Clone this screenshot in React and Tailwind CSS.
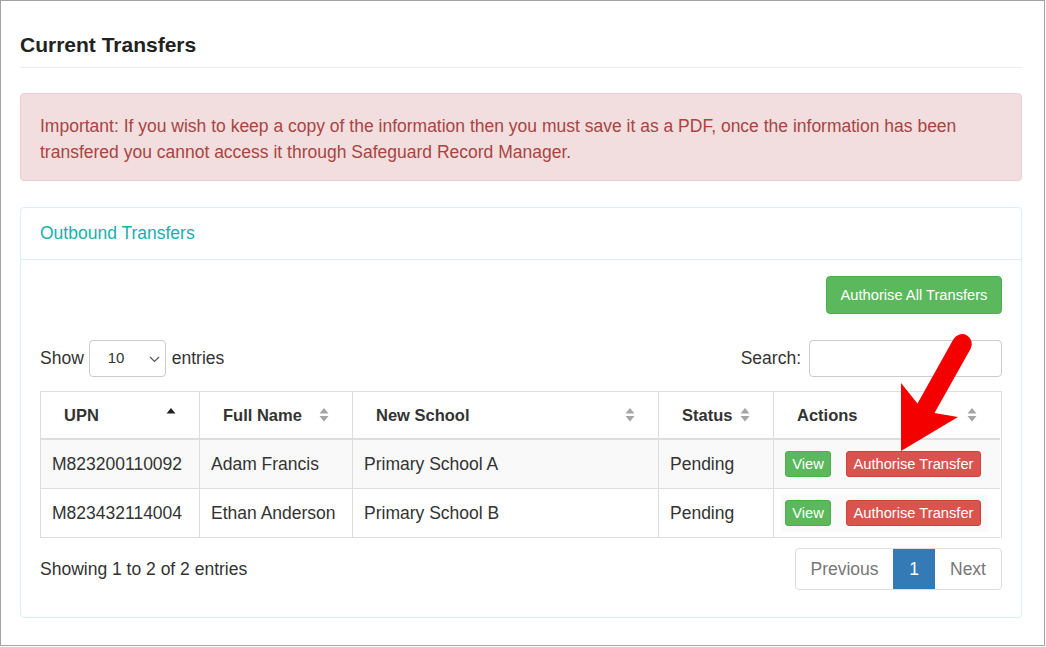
import React from "react";

const font = { fontFamily: '"Liberation Sans", Arial, sans-serif' };

function SortBoth() {
  return (
    <svg width="10" height="15" viewBox="0 0 10 15" className="absolute right-[23px] top-1/2 -translate-y-1/2">
      <path d="M5 0.5 L9.5 6 L0.5 6 Z" fill="#a5a5a5" />
      <path d="M0.5 8.5 L9.5 8.5 L5 14 Z" fill="#a5a5a5" />
    </svg>
  );
}

function SortUp() {
  return (
    <svg width="10" height="15" viewBox="0 0 10 15" className="absolute right-[23px] top-1/2 -translate-y-1/2">
      <path d="M5 0.5 L9.5 6 L0.5 6 Z" fill="#222" />
    </svg>
  );
}

function Th({ children, sort, last }) {
  return (
    <div className={`relative flex h-[48px] items-center border-b-2 border-[#ddd] ${last ? "" : "border-r"} pl-[23px] text-[16.5px] font-bold text-[#333]`}>
      {children}
      {sort === "up" ? <SortUp /> : <SortBoth />}
    </div>
  );
}

function Td({ children, last, bg }) {
  return (
    <div className={`flex h-[49px] items-center border-b border-[#ddd] ${last ? "" : "border-r"} ${bg} pl-[11px] text-[17.5px] text-[#333]`}>
      {children}
    </div>
  );
}

function Actions({ boxed }) {
  return (
    <div className={`flex items-center gap-[15px] ${boxed ? "bg-[#fafafa] -ml-[4px] px-[4px] py-[6px] pr-[7px]" : ""}`}>
      <button className="h-[26px] w-[46px] rounded-[3px] border border-[#4cae4c] bg-[#5cb85c] text-[14.7px] text-white">View</button>
      <button className="h-[26px] w-[135px] rounded-[3px] border border-[#d43f3a] bg-[#d9534f] text-[14.7px] text-white">Authorise Transfer</button>
    </div>
  );
}

const rows = [
  { upn: "M823200110092", name: "Adam Francis", school: "Primary School A", status: "Pending", bg: "bg-[#f9f9f9]" },
  { upn: "M823432114004", name: "Ethan Anderson", school: "Primary School B", status: "Pending", bg: "bg-white" },
];

export default function App() {
  return (
    <div style={font} className="relative h-[646px] w-[1045px] overflow-hidden border border-[#a3a3a3] bg-white pl-[19px] pr-[22px] text-[#333]">
      <h1 className="pt-[32px] text-[21px] font-bold leading-[24px] text-[#222]">Current Transfers</h1>
      <div className="mt-[10px] border-t border-[#eee]" />

      <div className="mt-[25px] rounded-[4px] border border-[#ebccd1] bg-[#f2dede] pb-[15px] pl-[19px] pr-[19px] pt-[19px] text-[17.5px] leading-[26px] text-[#a94442]">
        Important: If you wish to keep a copy of the information then you must save it as a PDF, once the information has been transfered you cannot access it through Safeguard Record Manager.
      </div>

      <div className="mt-[26px] rounded-[4px] border border-[#d8f2f2]">
        <div className="flex h-[52px] items-center border-b border-[#d8f2f2] pl-[19px] text-[17.5px] text-[#18b0ae]">
          Outbound Transfers
        </div>
        <div className="px-[19px] pb-[27px] pt-[16px]">
          <div className="flex justify-end">
            <button className="h-[38px] w-[176px] rounded-[4px] border border-[#4cae4c] bg-[#5cb85c] text-[14.7px] text-white">
              Authorise All Transfers
            </button>
          </div>

          <div className="mt-[26px] flex items-center justify-between">
            <div className="flex items-center text-[17.5px]">
              <span>Show</span>
              <div className="relative ml-[5px] mr-[6px] flex h-[37px] w-[77px] items-center rounded-[4px] border border-[#ccc] bg-white pl-[18px] text-[15px] text-[#333]">
                10
                <svg width="11" height="7" viewBox="0 0 11 7" className="absolute right-[5px] top-[15px]">
                  <path d="M1 1 L5.5 5.5 L10 1" fill="none" stroke="#555" strokeWidth="1.2" />
                </svg>
              </div>
              <span>entries</span>
            </div>
            <div className="flex items-center text-[17.5px]">
              <span className="mr-[8px]">Search:</span>
              <div className="h-[37px] w-[193px] rounded-[4px] border border-[#ccc] bg-white" />
            </div>
          </div>

          <div className="mt-[14px] grid grid-cols-[159px_153px_306px_115px_226px] border border-b-0 border-[#ddd]">
            <Th sort="up">UPN</Th>
            <Th>Full Name</Th>
            <Th>New School</Th>
            <Th>Status</Th>
            <Th last>Actions</Th>
            {rows.map((r, i) => (
              <React.Fragment key={r.upn}>
                <Td bg={r.bg}>{r.upn}</Td>
                <Td bg={r.bg}>{r.name}</Td>
                <Td bg={r.bg}>{r.school}</Td>
                <Td bg={r.bg}>{r.status}</Td>
                <Td bg={r.bg} last>
                  <Actions boxed={i === 1} />
                </Td>
              </React.Fragment>
            ))}
          </div>

          <div className="mt-[10px] flex items-center justify-between">
            <span className="text-[17.5px]">Showing 1 to 2 of 2 entries</span>
            <div className="flex h-[42px] overflow-hidden rounded-[4px] border border-[#ddd] text-[17.5px]">
              <div className="flex w-[97px] items-center justify-center text-[#777]">Previous</div>
              <div className="flex w-[42px] items-center justify-center bg-[#337ab7] text-white">1</div>
              <div className="flex w-[66px] items-center justify-center text-[#777]">Next</div>
            </div>
          </div>
        </div>
      </div>

      <svg className="pointer-events-none absolute left-[-1px] top-[-1px]" width="1046" height="647" viewBox="0 0 1046 647">
        <path
          d="M953.5 339 L917.5 403.5 L901 383 L901 451 L958 417 L934.5 413 L970.5 349 A9.5 9.5 0 0 0 953.5 339 Z"
          fill="#f40000"
        />
      </svg>
    </div>
  );
}
